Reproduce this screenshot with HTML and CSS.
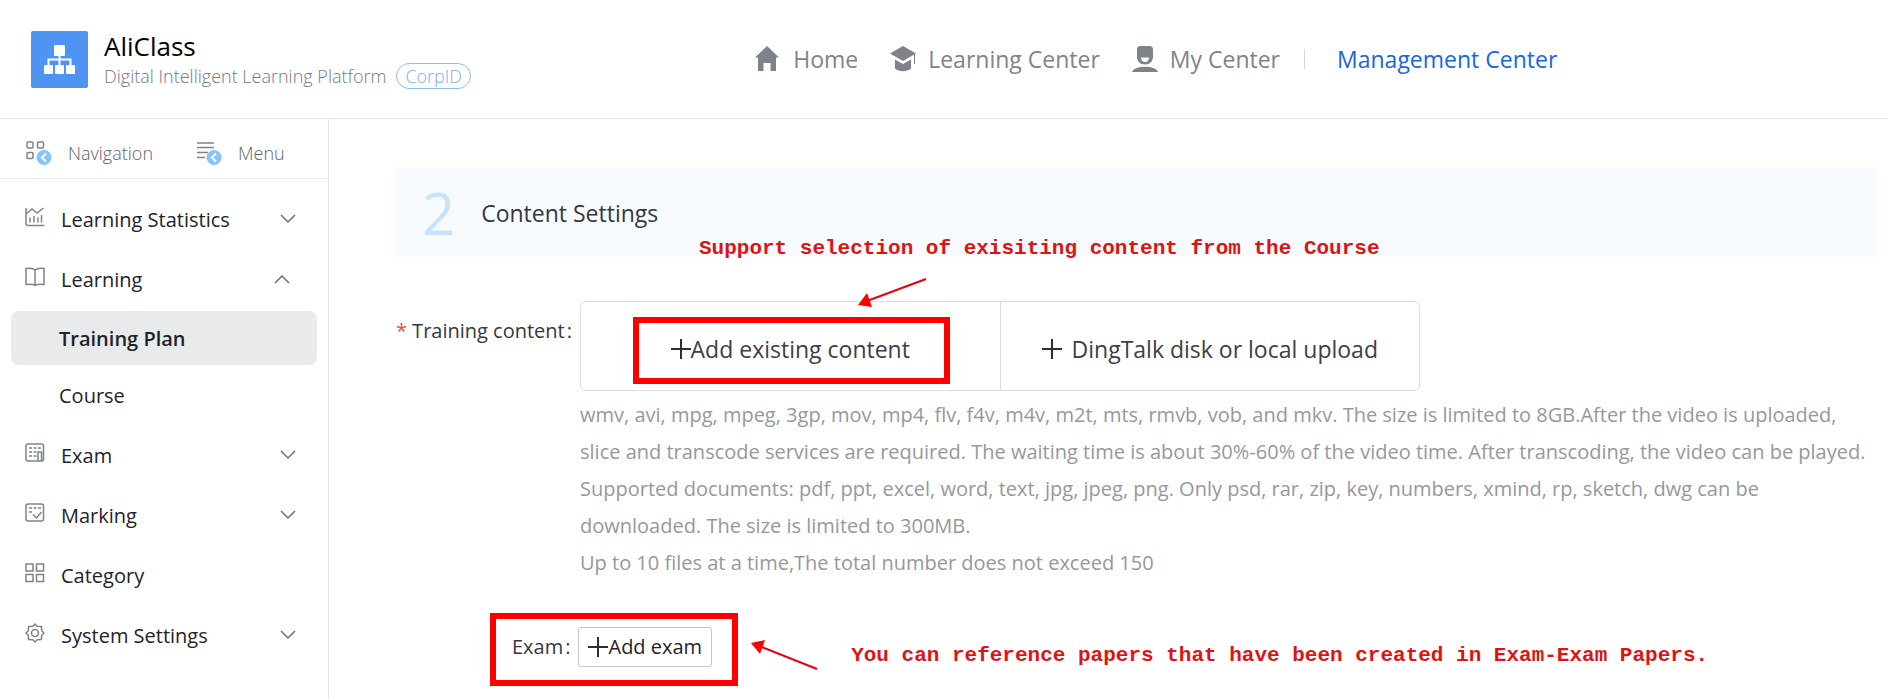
FILE: index.html
```html
<!DOCTYPE html>
<html lang="en">
<head>
    <meta charset="UTF-8">
    <meta name="viewport" content="width=device-width, initial-scale=1.0">
    <title>AliClass</title>
    <link rel="stylesheet" href="styles.css">
</head>
<body>
    <header class="header">
        <div class="brand">
            <svg class="logo" viewBox="0 0 57 57" fill="#fff">
                <rect width="57" height="57" rx="2" fill="#4e94f2"/>
                <rect x="23" y="14" width="11" height="11" rx="1"/>
                <rect x="13" y="34" width="9" height="9" rx="1"/>
                <rect x="24" y="34" width="9" height="9" rx="1"/>
                <rect x="35" y="34" width="9" height="9" rx="1"/>
                <path d="M28.500 25v9M17.500 34v-5.500h22V34" fill="none" stroke="#fff" stroke-width="2"/>
            </svg>
            <div class="brand-text">
                <h1>AliClass</h1>
                <div class="brand-sub">
                    <span>Digital Intelligent Learning Platform</span>
                    <span class="corp-id">CorpID</span>
                </div>
            </div>
        </div>
        <nav class="top-nav">
            <a href="#">
                <svg class="top-icon" viewBox="0 0 26 26" fill="#7f8389">
                    <path d="M12 0l12 11.500h-3V25h-5.500v-8h-7v8H3V11.500H0z"/>
                </svg>
                Home
            </a>
            <a href="#">
                <svg class="top-icon" viewBox="0 0 26 26" fill="#7f8389">
                    <path d="M13 0l13 7.500L13 15 0 7.500z"/>
                    <path d="M5 13.500l8 4.500 8-4.500v9c-4 3.500-12 3.500-16 0z"/>
                    <path d="M24.500 7.500V18" stroke="#7f8389" stroke-width="1"/>
                </svg>
                Learning Center
            </a>
            <a href="#">
                <svg class="top-icon" viewBox="0 0 26 26" fill="#7f8389">
                    <path fill-rule="evenodd" d="M9 0h8c3 0 4 1 4 4v7c0 4-3 7.500-8 7.500S5 15 5 11V4c0-3 1-4 4-4zM9 11.500c0 6 8 6 8 0z"/>
                    <path d="M0 26c2-7 24-7 26 0z"/>
                </svg>
                My Center
            </a>
            <span class="divider"></span>
            <a href="#" class="active">Management Center</a>
        </nav>
    </header>

    <div class="page">
        <aside class="sidebar">
            <div class="tabs">
                <button type="button">
                    <svg class="tab-icon" viewBox="0 0 26 24" fill="none" stroke="#7f8389" stroke-width="1.500">
                        <rect x="1" y="1" width="6" height="6" rx="1"/>
                        <rect x="11.500" y="1" width="6" height="6" rx="1"/>
                        <rect x="1" y="11.500" width="6" height="6" rx="1"/>
                        <circle cx="18" cy="16.500" r="7.500" fill="#86c5fb" stroke="none"/>
                        <path d="M20 12.500l-4 4 4 4" stroke="#fff" stroke-width="2"/>
                    </svg>
                    Navigation
                </button>
                <button type="button">
                    <svg class="tab-icon" viewBox="0 0 26 24" fill="none" stroke="#7f8389" stroke-width="1.500">
                        <path d="M1 2h17M1 6.500h17M1 11.500h11M1 16.500h8"/>
                        <circle cx="18" cy="16.500" r="7.500" fill="#86c5fb" stroke="none"/>
                        <path d="M20 12.500l-4 4 4 4" stroke="#fff" stroke-width="2"/>
                    </svg>
                    Menu
                </button>
            </div>
            <nav class="menu">
                <button type="button" class="menu-item">
                    <svg class="menu-icon" viewBox="0 0 20 20">
                        <path d="M1 1v15.500q0 2 2 2h16.500M1 7l6-5 5 4 6.500-5M5 15.500v-5M9 15.500V9M13 15.500v-5M16.500 15.500V8"/>
                    </svg>
                    <span>Learning Statistics</span>
                    <svg class="arrow" viewBox="0 0 16 10"><path d="M1 1l7 7 7-7"/></svg>
                </button>
                <button type="button" class="menu-item open">
                    <svg class="menu-icon" viewBox="0 0 20 20">
                        <path d="M10 3C8 1 5 1 1 1.500v16c4-.5 7-.5 9 1 2-1.500 5-1.500 9-1v-16C15 1 12 1 10 3zM10 3v15.500"/>
                    </svg>
                    <span>Learning</span>
                    <svg class="arrow" viewBox="0 0 16 10"><path d="M1 9l7-7 7 7"/></svg>
                </button>
                <a href="#" class="sub-item active">Training Plan</a>
                <a href="#" class="sub-item">Course</a>
                <button type="button" class="menu-item">
                    <svg class="menu-icon" viewBox="0 0 20 20">
                        <path d="M13 18H3q-2 0-2-2V3q0-2 2-2h13.500q2 0 2 2v13q0 2-2 2H13V9h3.500v9"/>
                        <path d="M4 5h3M8.500 5h3M13 5h3M4 9h3M8.500 9h3M4 13h3M8.500 13h3"/>
                    </svg>
                    <span>Exam</span>
                    <svg class="arrow" viewBox="0 0 16 10"><path d="M1 1l7 7 7-7"/></svg>
                </button>
                <button type="button" class="menu-item">
                    <svg class="menu-icon" viewBox="0 0 20 20">
                        <rect x="1" y="1" width="17.500" height="17" rx="2"/>
                        <path d="M4 5h3M8.500 5h3M13 5h3M4 9h3M8 11.500l3.500 3.500 5-6"/>
                    </svg>
                    <span>Marking</span>
                    <svg class="arrow" viewBox="0 0 16 10"><path d="M1 1l7 7 7-7"/></svg>
                </button>
                <a href="#" class="menu-item">
                    <svg class="menu-icon" viewBox="0 0 20 20">
                        <path d="M1 1h7v7H1zM11.500 1h7v7h-7zM1 11.500h7v7H1zM11.500 11.500h7v7h-7z"/>
                    </svg>
                    <span>Category</span>
                </a>
                <button type="button" class="menu-item">
                    <svg class="menu-icon" viewBox="0 0 20 20">
                        <path d="M10 1l2.200 2.300 4.200.3.300 4.200L19 10l-2.300 2.200-.3 4.200-4.200.3L10 19l-2.200-2.300-4.200-.3-.3-4.200L1 10l2.300-2.200.3-4.200 4.200-.3z" stroke-linejoin="round"/>
                        <circle cx="10" cy="10" r="3.500"/>
                    </svg>
                    <span>System Settings</span>
                    <svg class="arrow" viewBox="0 0 16 10"><path d="M1 1l7 7 7-7"/></svg>
                </button>
            </nav>
        </aside>

        <main class="content">
            <div class="step">
                <span class="step-number">2</span>
                <h2>Content Settings</h2>
                <p class="note step-note">Support selection of exisiting content from the Course</p>
            </div>

            <div class="form-row">
                <div class="label" id="training-label"><span class="required">*</span> Training content<span class="colon">:</span></div>
                <div class="field">
                    <div class="upload" role="group" aria-labelledby="training-label">
                        <button type="button">
                            <svg class="plus" viewBox="0 0 20 20"><path d="M10 0v20M0 10h20"/></svg>Add existing content
                            <span class="highlight"></span>
                        </button>
                        <button type="button" class="spaced">
                            <svg class="plus" viewBox="0 0 20 20"><path d="M10 0v20M0 10h20"/></svg>DingTalk disk or local upload
                        </button>
                        <svg class="pointer upload-pointer" viewBox="0 0 70 30">
                            <path d="M69 2L10 24" stroke="#e60012" stroke-width="2"/>
                            <path d="M1 28l9-12 5 14z" fill="#f00"/>
                        </svg>
                    </div>
                    <div class="help">
                        <p>wmv, avi, mpg, mpeg, 3gp, mov, mp4, flv, f4v, m4v, m2t, mts, rmvb, vob, and mkv. The size is limited to 8GB.After the video is uploaded, slice and transcode services are required. The waiting time is about 30%-60% of the video time. After transcoding, the video can be played.</p>
                        <p>Supported documents: pdf, ppt, excel, word, text, jpg, jpeg, png. Only psd, rar, zip, key, numbers, xmind, rp, sketch, dwg can be<br>downloaded. The size is limited to 300MB.</p>
                        <p>Up to 10 files at a time,The total number does not exceed 150</p>
                    </div>
                </div>
            </div>

            <div class="exam-row">
                <div class="exam-box">
                    <div class="label" id="exam-label">Exam<span class="colon">:</span></div>
                    <button type="button" class="add-exam" aria-describedby="exam-label">
                        <svg class="plus" viewBox="0 0 20 20"><path d="M10 0v20M0 10h20"/></svg>Add exam
                    </button>
                </div>
                <svg class="pointer" viewBox="0 0 70 30">
                    <path d="M68 29L10 6" stroke="#e60012" stroke-width="2"/>
                    <path d="M2 3l14-3-5 14z" fill="#f00"/>
                </svg>
                <p class="note">You can reference papers that have been created in Exam-Exam Papers.</p>
            </div>
        </main>
    </div>
</body>
</html>
```
FILE: styles.css
```css
* {
    box-sizing: border-box;
}
body {
    margin: 0;
    min-height: 100vh;
    display: flex;
    flex-direction: column;
    font-family: "Open Sans", "Noto Sans", sans-serif;
    font-size: 20px;
    color: #1f2329;
    background-color: #fff;
}
h1, h2, p {
    margin: 0;
    font-weight: 400;
}
a {
    color: inherit;
    text-decoration: none;
}
button {
    font: inherit;
    color: inherit;
    background: none;
    border: none;
    padding: 0;
    cursor: pointer;
}
svg {
    flex-shrink: 0;
}
.header {
    display: flex;
    align-items: center;
    height: 119px;
    border-bottom: 1px solid #e4e4e6;
}
.brand {
    display: flex;
    align-items: center;
    gap: 16px;
    width: 40%;
    padding-left: 31px;
}
.logo {
    width: 57px;
    height: 57px;
}
.brand-text h1 {
    color: #000;
    font-size: 26px;
    line-height: 34px;
}
.brand-sub {
    display: flex;
    align-items: center;
    gap: 10px;
    font-size: 18px;
    line-height: 26px;
    font-weight: 300;
    color: #757980;
    white-space: nowrap;
}
.corp-id {
    padding: 0 8px;
    border: 1px solid #8ebdf5;
    border-radius: 14px;
    line-height: 24px;
    color: #7fadf0;
}
.top-nav {
    display: flex;
    align-items: center;
    gap: 32px;
    font-size: 23px;
    color: #7f8389;
    white-space: nowrap;
}
.top-nav a {
    display: flex;
    align-items: center;
    gap: 12px;
}
.top-nav .active {
    color: #1a66e0;
}
.top-icon {
    width: 26px;
    height: 26px;
}
.divider {
    width: 1px;
    height: 20px;
    margin-left: -8px;
    background-color: #d5d6d8;
}
.page {
    flex: 1;
    display: flex;
}
.sidebar {
    flex: 0 0 329px;
    border-right: 1px solid #e8e8ea;
}
.tabs {
    display: flex;
    gap: 43px;
    height: 60px;
    padding: 8px 0 0 26px;
    border-bottom: 1px solid #ececee;
    font-size: 18px;
    font-weight: 300;
    color: #5f6368;
}
.tabs button {
    display: flex;
    align-items: center;
    gap: 16px;
}
.tab-icon {
    width: 26px;
    height: 24px;
}
.menu {
    padding: 10px 11px;
}
.menu-item {
    display: flex;
    align-items: center;
    gap: 16px;
    width: 100%;
    height: 60px;
    padding: 0 21px 0 14px;
}
.menu-item.open {
    padding-right: 27px;
}
.menu-icon {
    width: 20px;
    height: 20px;
    margin-bottom: 4px;
    fill: none;
    stroke: #7f8389;
    stroke-width: 1.5;
}
.arrow {
    width: 16px;
    height: 10px;
    margin-left: auto;
    fill: none;
    stroke: #6b6f75;
    stroke-width: 1.5;
}
.sub-item {
    display: flex;
    align-items: center;
    height: 54px;
    margin: 2px 0 3px;
    padding-left: 48px;
    border-radius: 8px;
}
.sub-item.active {
    background-color: #e8eaeb;
    font-weight: 600;
}
.content {
    flex: 1;
    min-width: 0;
    padding: 48px 12px 0 66px;
}
.step {
    position: relative;
    display: flex;
    align-items: center;
    gap: 26px;
    height: 90px;
    padding: 2px 0 0 27px;
    background-color: #f7faff;
}
.step-number {
    font-size: 58px;
    line-height: 60px;
    color: #c6e2fd;
}
.step h2 {
    font-size: 23px;
    color: #34383e;
}
.note {
    font-family: "Liberation Mono", monospace;
    font-size: 21px;
    font-weight: 700;
    line-height: 30px;
    color: #dc1414;
    white-space: nowrap;
}
.step-note {
    position: absolute;
    left: 304px;
    bottom: -7px;
}
.form-row {
    display: flex;
    margin-top: 44px;
}
.label {
    flex: 0 0 185px;
    padding-right: 8px;
    text-align: right;
    line-height: 60px;
    white-space: nowrap;
    color: #34383e;
}
.required {
    color: #f5494d;
}
.colon {
    padding-left: 2px;
}
.field {
    flex: 1;
    min-width: 0;
}
.upload {
    position: relative;
    display: flex;
    max-width: 840px;
    height: 90px;
    border: 1px solid #dcdde0;
    border-radius: 5px;
    font-size: 23px;
    color: #3c4046;
}
.upload button {
    position: relative;
    flex: 1;
    display: flex;
    align-items: center;
    justify-content: center;
    padding-top: 6px;
}
.upload .spaced {
    gap: 10px;
    border-left: 1px solid #dcdde0;
}
.plus {
    width: 20px;
    height: 20px;
    fill: none;
    stroke: #2b2e33;
    stroke-width: 2;
}
.highlight {
    position: absolute;
    inset: 15px 50px 6px 52px;
    border: 6px solid #f00;
}
.pointer {
    width: 70px;
    height: 30px;
    fill: none;
}
.upload-pointer {
    position: absolute;
    left: 276px;
    top: -25px;
}
.help {
    padding-top: 5px;
    line-height: 37px;
    color: #96989b;
}
.exam-row {
    display: flex;
    align-items: center;
    margin: 32px 0 0 95px;
}
.exam-box {
    display: flex;
    align-items: center;
    height: 73px;
    padding: 0 20px 6px 16px;
    border: 6px solid #f00;
}
.exam-box .label {
    flex: none;
}
.add-exam {
    display: flex;
    align-items: center;
    height: 40px;
    padding: 0 9px;
    border: 1px solid #c4c6c9;
    border-radius: 3px;
}
.exam-row .pointer {
    margin: 10px 32px 0 11px;
}
.exam-row .note {
    padding-top: 13px;
}
```
